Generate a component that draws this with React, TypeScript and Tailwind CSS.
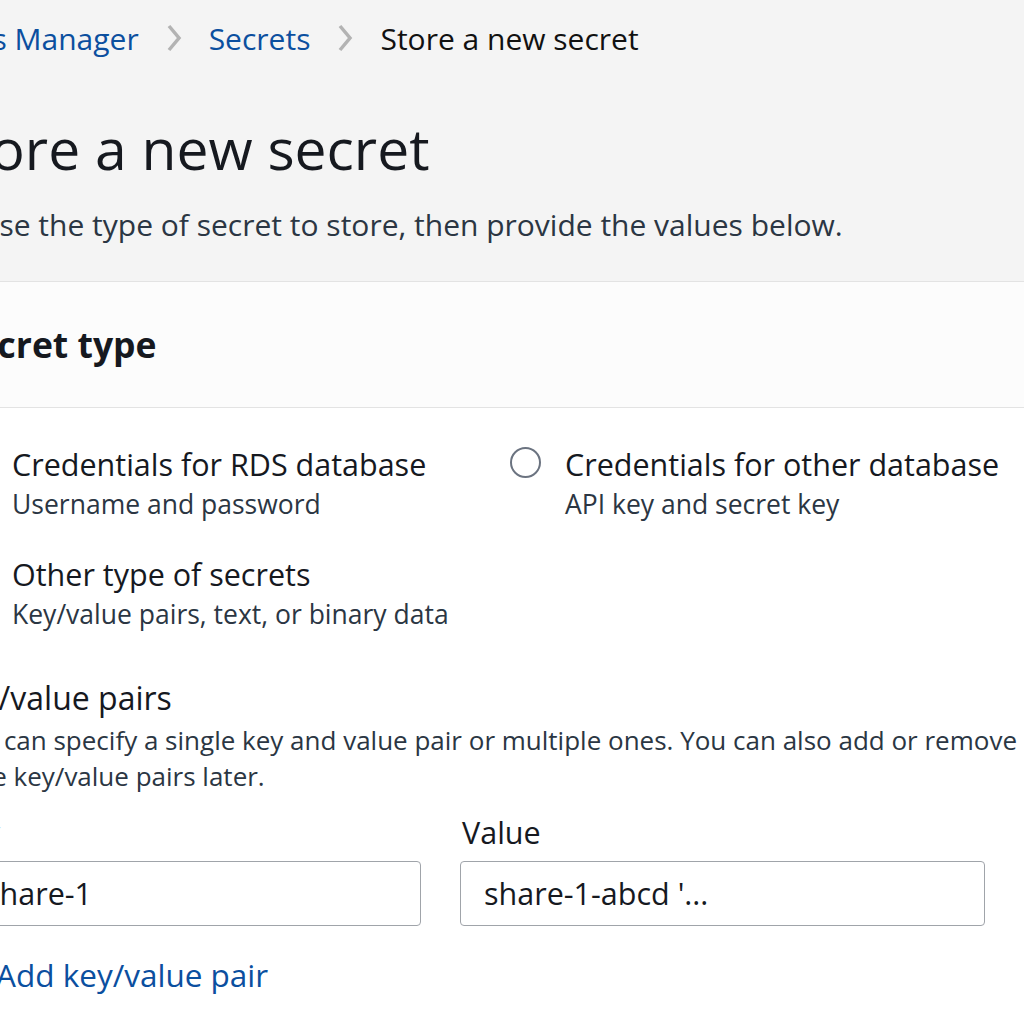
import React from "react";

function Chevron() {
  return (
    <svg width="18" height="30" viewBox="0 0 18 30" className="mx-[26px]">
      <path d="M4 3 L14 15 L4 27" fill="none" stroke="#b3b3b3" strokeWidth="3.5" />
    </svg>
  );
}

function Radio() {
  return (
    <div className="w-[31px] h-[31px] rounded-full border-[2px] border-[#6b7380] bg-white shrink-0 mt-[3px]" />
  );
}

export default function App() {
  return (
    <div
      className="w-[1024px] h-[1024px] overflow-hidden bg-white text-[#16191f]"
      style={{ fontFamily: '"Open Sans", "Noto Sans", sans-serif' }}
    >
      <div className="bg-[#f4f4f4] h-[282px] border-b border-[#e3e3e3]">
        <div className="flex items-center h-[76px] ml-[-95px] text-[30px] whitespace-nowrap">
          <span className="text-[#0b4f9f]">Secrets Manager</span>
          <Chevron />
          <span className="text-[#0b4f9f]">Secrets</span>
          <Chevron />
          <span className="text-[#111]">Store a new secret</span>
        </div>
        <h1 className="ml-[-61px] mt-[32px] text-[57px] leading-[80px] text-[#16191f] whitespace-nowrap">Store a new secret</h1>
        <p className="ml-[-74px] mt-[16px] text-[30px] leading-[42px] text-[#2b3643] whitespace-nowrap">
          Choose the type of secret to store, then provide the values below.
        </p>
      </div>
      <div className="bg-[#fcfcfc] h-[126px] border-b border-[#e3e3e3] flex items-center">
        <h2 className="ml-[-43px] text-[35.5px] font-bold leading-[48px] mt-[-2px] whitespace-nowrap">Secret type</h2>
      </div>
      <div className="ml-[-44px] pt-[36px]">
        <div className="grid grid-cols-[554px_1fr]">
          <div className="flex gap-[25px]">
            <Radio />
            <div className="whitespace-nowrap">
              <div className="text-[30.5px] leading-[40px]">Credentials for RDS database</div>
              <div className="text-[26.5px] leading-[40px] text-[#2b3643]">Username and password</div>
            </div>
          </div>
          <div className="flex gap-[24px]">
            <Radio />
            <div className="whitespace-nowrap">
              <div className="text-[30.5px] leading-[40px]">Credentials for other database</div>
              <div className="text-[26.5px] leading-[40px] text-[#2b3643]">API key and secret key</div>
            </div>
          </div>
        </div>
        <div className="flex gap-[25px] mt-[30px]">
          <Radio />
          <div className="whitespace-nowrap">
            <div className="text-[30.5px] leading-[40px]">Other type of secrets</div>
            <div className="text-[26.5px] leading-[40px] text-[#2b3643]">Key/value pairs, text, or binary data</div>
          </div>
        </div>
      </div>
      <div className="mt-[43px]">
        <div className="ml-[-55px] text-[32px] leading-[42px] whitespace-nowrap">Key/value pairs</div>
        <div className="text-[26px] leading-[36px] text-[#2b3643] mt-[3px] whitespace-nowrap">
          <p className="ml-[-49px]">
            You can specify a single key and value pair or multiple ones. You can also add or remove
          </p>
          <p className="ml-[-60px]">these key/value pairs later.</p>
        </div>
        <div className="flex gap-[39px] mt-[17px] ml-[-39px]">
          <div className="w-[460px]">
            <div className="text-[30.5px] leading-[42px] ml-[-12px]">Key</div>
            <div className="mt-[8px] h-[65px] rounded-[4px] border border-[#a0a4aa] bg-white flex items-center px-[23px] text-[30.5px] whitespace-nowrap">
              share-1
            </div>
          </div>
          <div className="w-[525px]">
            <div className="text-[30.5px] leading-[42px] ml-[2px]">Value</div>
            <div className="mt-[8px] h-[65px] rounded-[4px] border border-[#a0a4aa] bg-white flex items-center px-[23px] text-[30.5px] whitespace-nowrap">
              share-1-abcd '...
            </div>
          </div>
        </div>
        <div className="mt-[28px] ml-[-4px] text-[31.5px] leading-[42px] text-[#0b4f9f] whitespace-nowrap">Add key/value pair</div>
      </div>
    </div>
  );
}
